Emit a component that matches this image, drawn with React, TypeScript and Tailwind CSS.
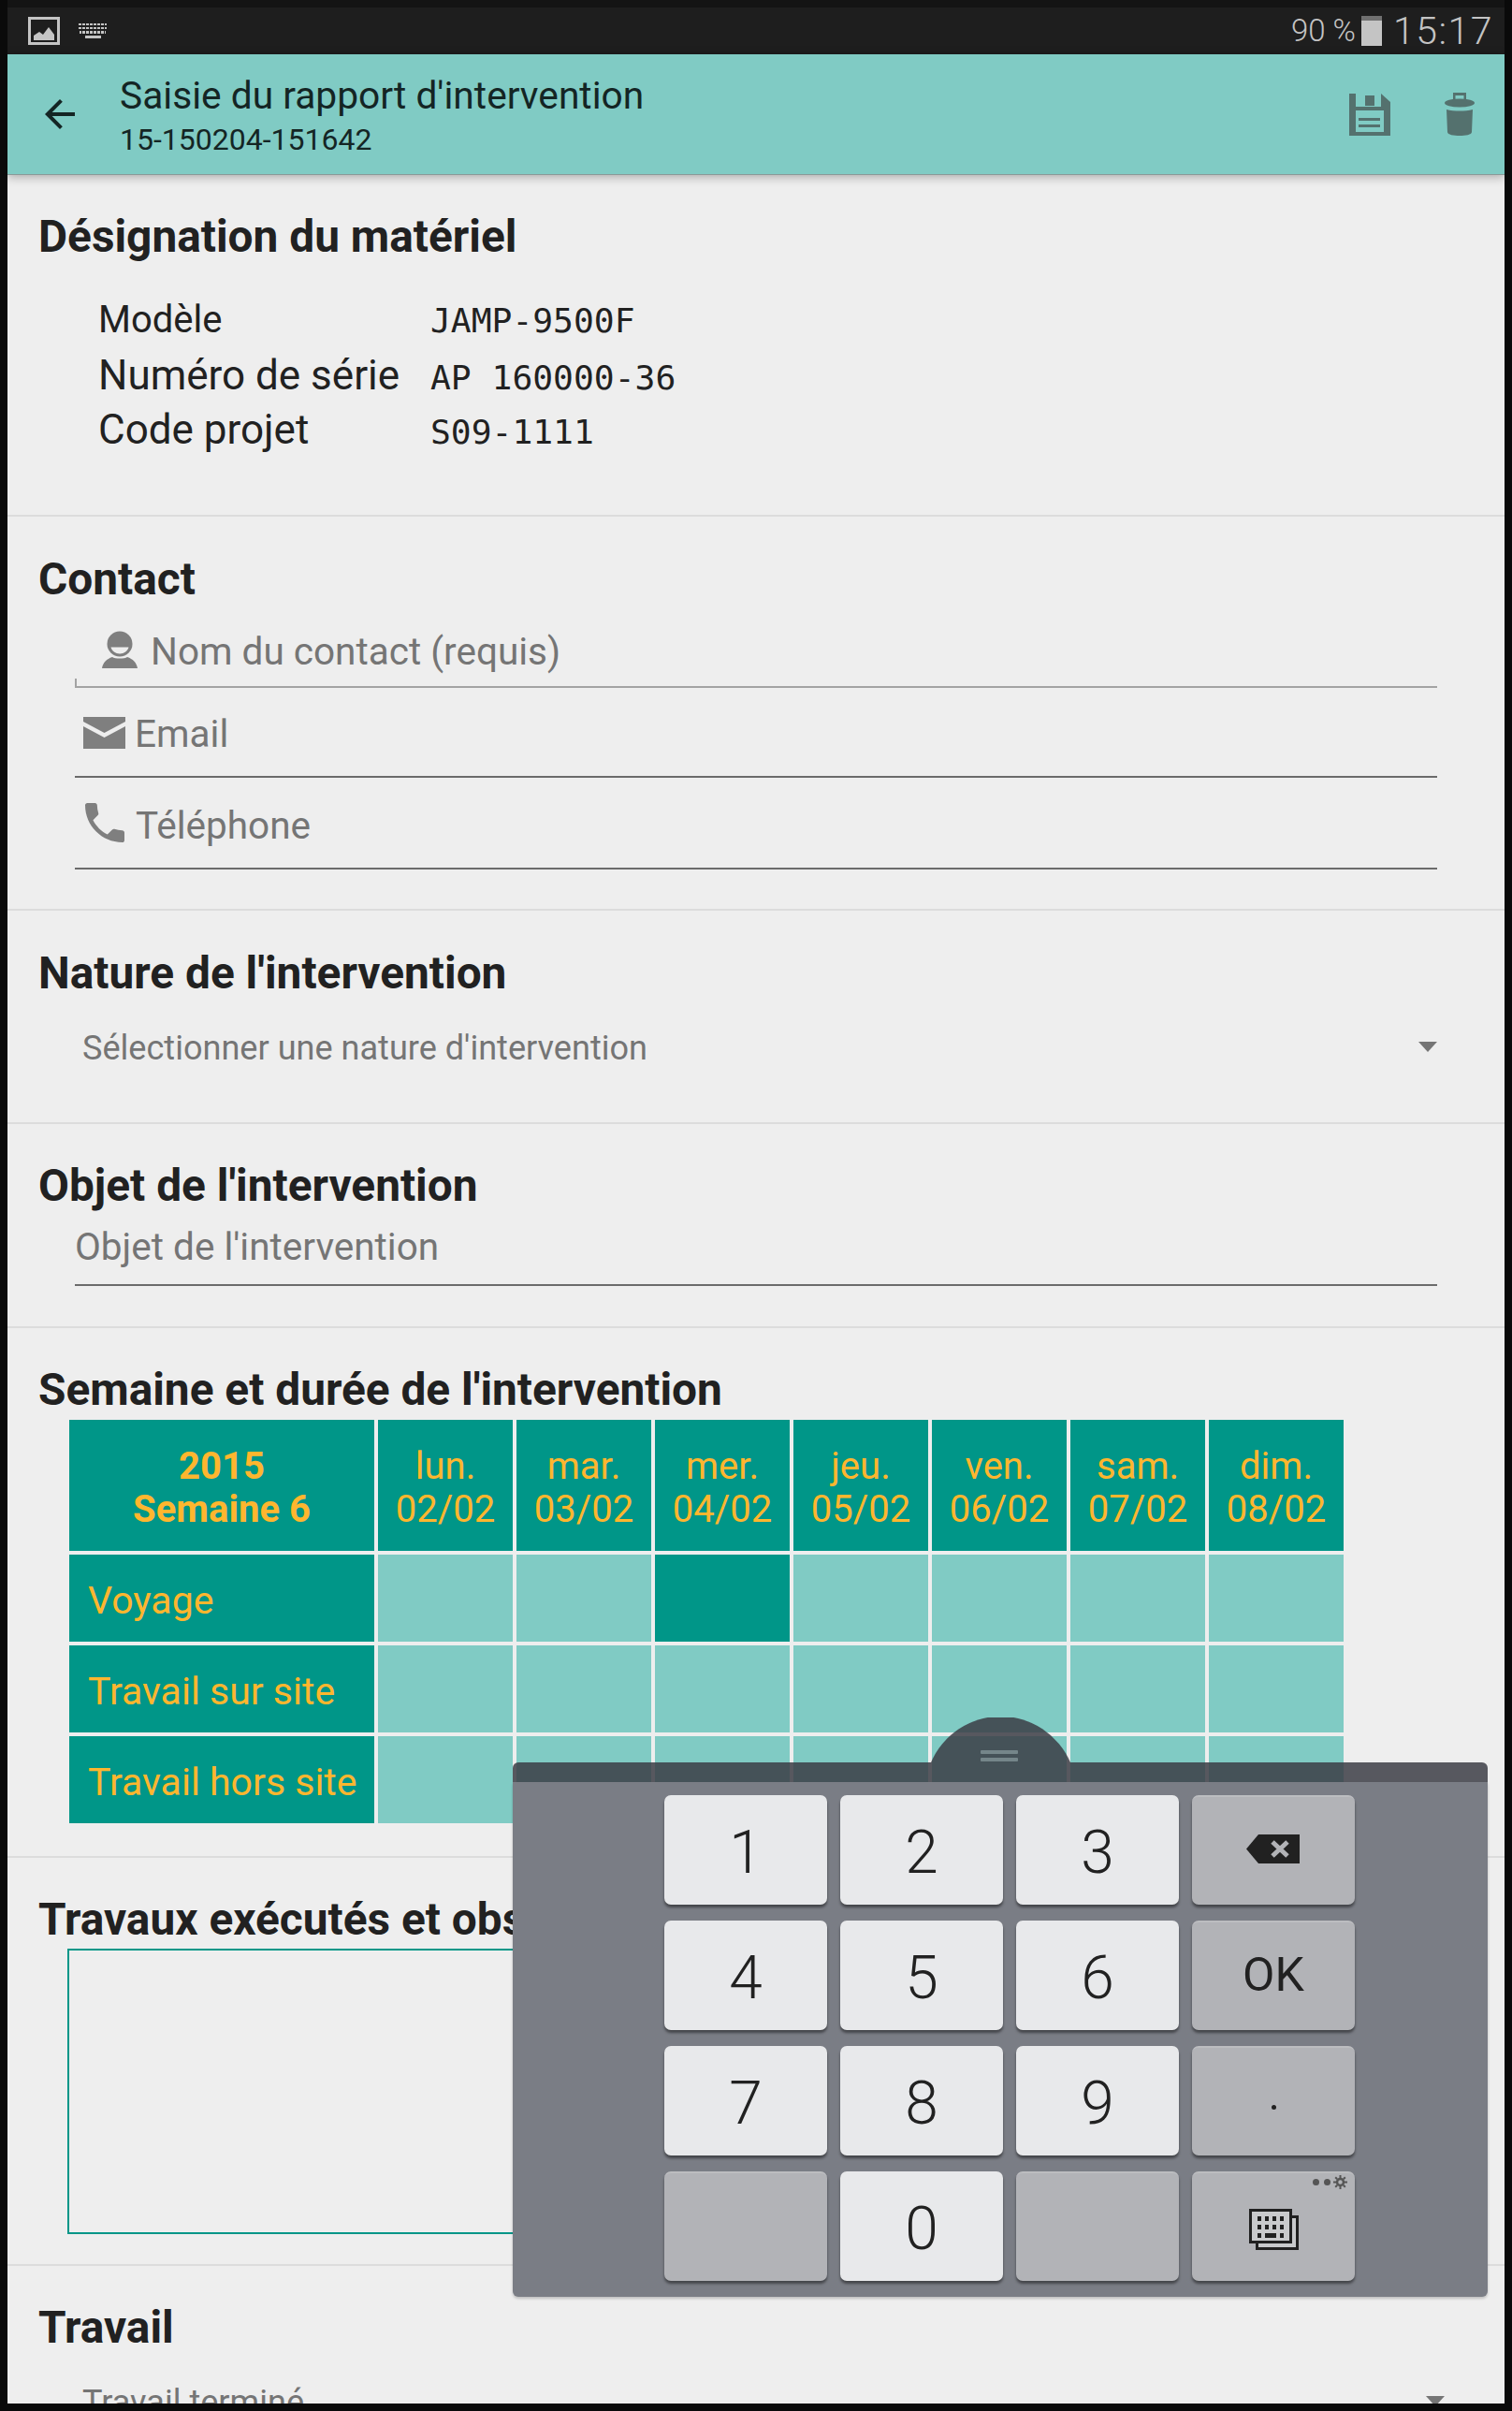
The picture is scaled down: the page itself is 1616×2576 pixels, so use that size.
import type { ReactNode } from 'react';

const days = [
  ['lun.', '02/02'],
  ['mar.', '03/02'],
  ['mer.', '04/02'],
  ['jeu.', '05/02'],
  ['ven.', '06/02'],
  ['sam.', '07/02'],
  ['dim.', '08/02'],
];

const rows = ['Voyage', 'Travail sur site', 'Travail hors site'];

const details = [
  { label: 'Modèle', value: 'JAMP-9500F', size: 'text-[40px]' },
  { label: 'Numéro de série', value: 'AP 160000-36', size: 'text-[44px]' },
  { label: 'Code projet', value: 'S09-1111', size: 'text-[44px]' },
];

function Heading({ children }: { children: ReactNode }) {
  return <h2 className="text-[47.8px] leading-[52px] font-bold text-[#212121] whitespace-nowrap">{children}</h2>;
}

function Section({ height, children }: { height: string; children: ReactNode }) {
  return <section className={`${height} shrink-0 pt-[40px] pl-[33px] border-b-[2px] border-[#dcdcdc]`}>{children}</section>;
}

function Caret() {
  return <div className="w-0 h-0 -mt-[3px] border-x-[10px] border-x-transparent border-t-[11px] border-t-[#757575]" />;
}

function Key({ children, dark }: { children?: ReactNode; dark?: boolean }) {
  return (
    <div
      className={
        dark
          ? 'relative flex items-center justify-center rounded-[7px] bg-[#b2b3b7] border-t-[2px] border-[#bcbdc0] shadow-[0_3px_3px_rgba(0,0,0,0.45)] text-[#212121]'
          : 'relative flex items-center justify-center rounded-[7px] bg-[#e8e9eb] shadow-[0_3px_3px_rgba(0,0,0,0.45)] pt-[6px] text-[64px] font-light text-[#212121]'
      }
    >
      {children}
    </div>
  );
}

export default function App() {
  return (
    <div className="relative w-[1616px] h-[2576px] overflow-hidden bg-[#0a0a0a] pl-[8px] pr-[8px] pb-[8px] font-['Roboto',sans-serif]">
      <div className="flex flex-col h-full overflow-hidden bg-[#eeeeee]">
        <div className="shrink-0 h-[58px] pt-[8px] bg-[#1e1e1e] border-t-[8px] border-[#141414] flex items-center pl-[22px] pr-[12px] text-[#c4c4c4]">
          <svg width="34" height="30" viewBox="0 0 34 30" className="-mt-[8px]">
            <rect x="1.5" y="1.5" width="31" height="27" fill="none" stroke="#c4c4c4" strokeWidth="3" />
            <path d="M6 25v-5l6-4 4 3 6-8 6 8v6z" fill="#c4c4c4" />
          </svg>
          <svg width="30" height="16" viewBox="0 0 30 16" className="ml-[20px] -mt-[8px]" fill="#c4c4c4">
            <path d="M0 0h30v2H0zM0 4h30v2H0zM1 8h28v3H1zM7 13h17v3H7z" />
            <path d="M3 0h1v11H3zM7 0h1v11H7zM11 0h1v11h-1zM15 0h1v11h-1zM19 0h1v11h-1zM23 0h1v11h-1zM27 0h1v11h-1z" fill="#1e1e1e" />
          </svg>
          <div className="ml-auto flex items-center -mt-[8px]">
            <span className="text-[33px] font-light leading-[36px]">90 %</span>
            <div className="ml-[6px] w-[22px] h-[32px] bg-[#c4c4c4] relative">
              <div className="absolute left-0 right-0 top-0 h-[5px] bg-[#707070]" />
            </div>
            <span className="ml-[12px] text-[41px] font-light leading-[44px] tracking-[1.5px]">15:17</span>
          </div>
        </div>

        <header className="relative z-10 shrink-0 h-[129px] bg-[#80cbc4] border-b border-[#8a9a98] shadow-[0_2px_10px_rgba(0,0,0,0.3)] flex items-center pl-[32px] pr-[32px]">
          <svg width="48" height="48" viewBox="0 0 24 24" fill="#142524" className="shrink-0">
            <path d="M20 11H7.83l5.59-5.59L12 4l-8 8 8 8 1.41-1.41L7.83 13H20v-2z" />
          </svg>
          <div className="ml-[40px] mt-[3px] text-[#142524]">
            <div className="text-[40.7px] leading-[47px] whitespace-nowrap">Saisie du rapport d'intervention</div>
            <div className="mt-[4px] text-[32px] leading-[38px]">15-150204-151642</div>
          </div>
          <div className="ml-auto flex items-center gap-[58px]">
            <svg width="44" height="45" viewBox="0 0 44 45">
              <path d="M0 0h34l10 9v36H0z" fill="#54716e" />
              <path d="M7 0h27v14H7zM7 18h30v23H7z" fill="#80cbc4" />
              <path d="M17 2h10v11H17zM10 26h23v3H10zM10 33h23v3H10z" fill="#54716e" />
            </svg>
            <svg width="32" height="46" viewBox="0 0 32 46" fill="#54716e">
              <path d="M9 8V0h14v8h-2.500V3h-9v5z" />
              <ellipse cx="16" cy="11" rx="16" ry="4.500" />
              <path d="M2 18c8 2 20 2 28 0l-1 24c0 3-7 4-13 4s-13-1-13-4z" />
            </svg>
          </div>
        </header>

        <Section height="h-[365px]">
          <Heading>Désignation du matériel</Heading>
          <div className="mt-[36px] ml-[64px] text-[#212121]">
            {details.map(({ label, value, size }) => (
              <div key={label} className="flex h-[58.5px] items-baseline">
                <span className={`w-[355px] ${size} leading-[54px]`}>{label}</span>
                <span className="text-[36.3px] leading-[54px] font-['DejaVu_Sans_Mono',monospace] whitespace-pre">{value}</span>
              </div>
            ))}
          </div>
        </Section>

        <Section height="h-[421px]">
          <div className="pt-[1px]">
            <Heading>Contact</Heading>
          </div>
          <div className="ml-[39px] w-[1456px] text-[40.5px] leading-[47px] text-[#757575]">
            <div className="relative h-[90px] flex items-end pb-[13px] pl-[29px] border-b-[2px] border-[#a3a3a3]">
              <div className="absolute left-0 bottom-0 h-[8px] w-[2px] bg-[#a3a3a3]" />
              <svg width="38" height="40" viewBox="0 0 38 40" fill="#7f7f7f" className="mb-[6px]">
                <circle cx="19" cy="14" r="13.500" />
                <path d="M9.500 17.500h19c-1 4-5 7-9.500 7s-8.500-3-9.500-7z" fill="#eeeeee" />
                <path d="M0 40c1-6 5-10 11-12 3 2 13 2 16 0 6 2 10 6 11 12z" />
              </svg>
              <span className="ml-[14px] whitespace-nowrap">Nom du contact (requis)</span>
            </div>
            <div className="h-[96px] flex items-end pb-[21px] pl-[9px] border-b-[2px] border-[#6b6b6b]">
              <svg width="45" height="34" viewBox="0 0 45 34" fill="#7f7f7f" className="mb-[8px]">
                <path d="M0 0h45v5L22.500 17 0 5zM0 10l22.500 12L45 10v24H0z" />
              </svg>
              <span className="ml-[10px]">Email</span>
            </div>
            <div className="h-[98px] flex items-end pb-[21px] pl-[4px] border-b-[2px] border-[#6b6b6b]">
              <svg width="56" height="56" viewBox="0 0 24 24" fill="#7f7f7f" className="-mb-[1px]">
                <path d="M6.620 10.790c1.440 2.830 3.760 5.140 6.590 6.590l2.200-2.200c.27-.27.67-.36 1.020-.24 1.120.37 2.330.57 3.570.57.55 0 1 .45 1 1V20c0 .55-.45 1-1 1-9.390 0-17-7.610-17-17 0-.55.45-1 1-1h3.500c.55 0 1 .45 1 1 0 1.250.2 2.450.57 3.570.11.35.03.74-.25 1.020l-2.200 2.200z" />
              </svg>
              <span className="ml-[5px]">Téléphone</span>
            </div>
          </div>
        </Section>

        <Section height="h-[228px]">
          <div className="pt-[1px]">
            <Heading>Nature de l'intervention</Heading>
          </div>
          <div className="mt-[33px] ml-[47px] w-[1448px] flex items-center justify-between text-[36.1px] leading-[42px] text-[#757575]">
            <span>Sélectionner une nature d'intervention</span>
            <Caret />
          </div>
        </Section>

        <Section height="h-[218px]">
          <Heading>Objet de l'intervention</Heading>
          <div className="mt-[16px] ml-[39px] w-[1456px] pb-[16px] text-[40.5px] leading-[47px] text-[#757575] border-b-[2px] border-[#6b6b6b]">
            Objet de l'intervention
          </div>
        </Section>

        <Section height="h-[566px]">
          <Heading>Semaine et durée de l'intervention</Heading>
          <div className="mt-[6px] ml-[33px] grid grid-cols-[326px_repeat(7,144px)] grid-rows-[140px_93px_93px_93px] gap-[4px] text-[40px] text-[#ffb62e]">
            <div className="bg-[#009688] flex flex-col items-center justify-center pt-[6px] font-bold leading-[46px]">
              <div>2015</div>
              <div>Semaine 6</div>
            </div>
            {days.map(([day, date]) => (
              <div key={day} className="bg-[#009688] flex flex-col items-center justify-center pt-[6px] leading-[46px]">
                <div>{day}</div>
                <div>{date}</div>
              </div>
            ))}
            {rows.map((row, r) => (
              <div key={row} className="contents">
                <div className="bg-[#009688] flex items-center pt-[6px] pl-[20px] text-[41px] whitespace-nowrap">{row}</div>
                {days.map(([day], d) => (
                  <div key={day} className={r === 0 && d === 2 ? 'bg-[#009688]' : 'bg-[#80cbc4]'} />
                ))}
              </div>
            ))}
          </div>
        </Section>

        <Section height="h-[436px]">
          <Heading>Travaux exécutés et observations</Heading>
          <div className="mt-[5px] ml-[31px] w-[1465px] h-[305px] border-[2px] border-[#009688]" />
        </Section>

        <section className="pt-[40px] pl-[33px] pr-[64px]">
          <Heading>Travail</Heading>
          <div className="mt-[33px] ml-[47px] flex items-center justify-between text-[36.1px] leading-[42px] text-[#757575]">
            <span>Travail terminé</span>
            <Caret />
          </div>
        </section>
      </div>

      <div className="absolute left-[548px] top-[1835px] w-[1042px]">
        <div className="relative mx-auto w-[149px] h-[48px]">
          <svg width="149" height="48" viewBox="0 0 149 48" className="block">
            <path d="M0 48A81 81 0 0 1 149 48z" fill="rgba(57,58,66,0.83)" />
          </svg>
          <div className="absolute left-[53px] bottom-[1px] flex flex-col gap-[4px]">
            <div className="w-[40px] h-[4px] rounded-[1px] bg-[#75868a]" />
            <div className="w-[40px] h-[4px] rounded-[1px] bg-[#75868a]" />
          </div>
        </div>
        <div className="h-[21px] rounded-t-[6px] bg-[rgba(57,58,66,0.83)]" />
        <div className="h-[550px] rounded-b-[6px] bg-[#7a7d85] shadow-[0_2px_3px_rgba(0,0,0,0.2)] pt-[14px] pl-[162px] grid grid-cols-[repeat(4,174px)] grid-rows-[repeat(4,117px)] gap-x-[14px] gap-y-[17px]">
          <Key>1</Key>
          <Key>2</Key>
          <Key>3</Key>
          <Key dark>
            <svg width="57" height="31" viewBox="0 0 57 31" className="-mt-[5px] -ml-[2px]">
              <path d="M13 0h44v31H13L0 15.500z" fill="#212121" />
              <path d="M28 8l16 15M44 8L28 23" stroke="#b2b3b7" strokeWidth="5" fill="none" />
            </svg>
          </Key>
          <Key>4</Key>
          <Key>5</Key>
          <Key>6</Key>
          <Key dark>
            <span className="text-[50px] -mt-[2px]">OK</span>
          </Key>
          <Key>7</Key>
          <Key>8</Key>
          <Key>9</Key>
          <Key dark>
            <div className="w-[5px] h-[5px] mt-[12px] rounded-full bg-[#212121]" />
          </Key>
          <Key dark />
          <Key>0</Key>
          <Key dark />
          <Key dark>
            <div className="absolute right-[8px] top-[2px] flex items-center gap-[5px]">
              <div className="w-[7px] h-[7px] rounded-full bg-[#555]" />
              <div className="w-[7px] h-[7px] rounded-full bg-[#555]" />
              <svg width="15" height="15" viewBox="0 0 15 15" fill="none" stroke="#555" className="-ml-[2px]">
                <circle cx="7.500" cy="7.500" r="3.500" strokeWidth="2.500" />
                <path d="M7.500 0v3M7.500 12v3M0 7.500h3M12 7.500h3M2.200 2.200l2 2M10.800 10.800l2 2M2.200 12.800l2-2M10.800 4.200l2-2" strokeWidth="2" />
              </svg>
            </div>
            <svg width="53" height="44" viewBox="0 0 53 44" className="mt-[4px]">
              <path d="M7 7h46v37H7z" fill="#212121" />
              <path d="M10 10h40v31H10z" fill="#c9cacc" />
              <rect x="0" y="0" width="46" height="37" fill="#212121" />
              <rect x="3" y="3" width="40" height="31" fill="#c9cacc" />
              <path d="M9 8h4v5H9zM17 8h4v5h-4zM25 8h4v5h-4zM33 8h4v5h-4zM9 17h4v5H9zM17 17h4v5h-4zM25 17h4v5h-4zM33 17h4v5h-4zM9 26h4v5H9zM17 26h12v5H17zM33 26h4v5h-4z" fill="#212121" />
            </svg>
          </Key>
        </div>
      </div>
    </div>
  );
}
